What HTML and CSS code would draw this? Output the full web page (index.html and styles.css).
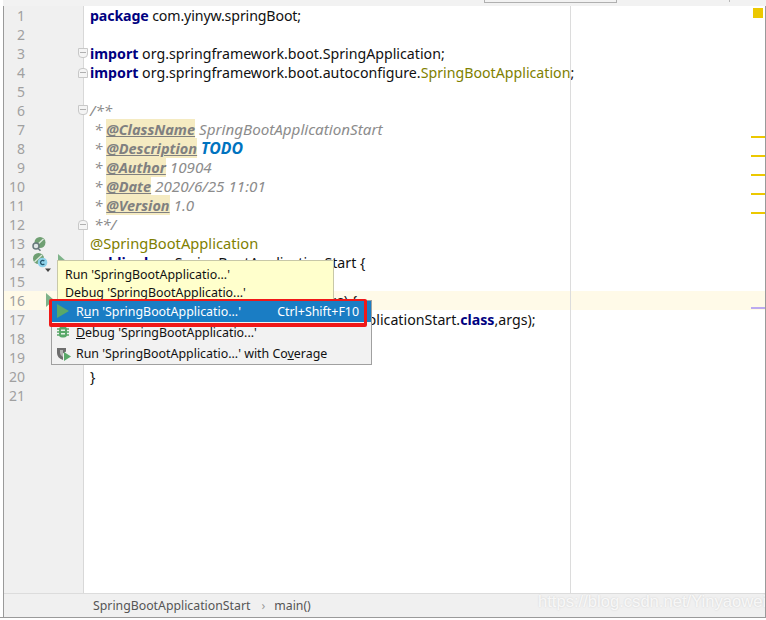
FILE: index.html
```html
<!DOCTYPE html>
<html lang="en">
<head>
    <meta charset="UTF-8">
    <title>SpringBootApplicationStart</title>
    <link rel="stylesheet" href="styles.css">
</head>
<body>
    <div class="ide">
        <div class="topbar"><div class="tab-edge"></div><div class="tick"></div></div>
        <div class="editor">
            <div class="gutter">
                <div class="num">1</div>
                <div class="num">2</div>
                <div class="num">3<span class="fold fold-open"></span></div>
                <div class="num">4<span class="fold fold-end"></span></div>
                <div class="num">5</div>
                <div class="num">6<span class="fold fold-open"></span></div>
                <div class="num">7</div>
                <div class="num">8</div>
                <div class="num">9</div>
                <div class="num">10</div>
                <div class="num">11</div>
                <div class="num">12<span class="fold fold-end"></span></div>
                <div class="num">13
                    <svg class="mark mark-bean" width="16" height="16" viewBox="0 0 16 16">
                        <circle cx="9" cy="6.5" r="5.5" fill="#6f9f72"/>
                        <path d="M5 10 L12.5 3" stroke="#dbe8db" stroke-width="1.4"/>
                        <circle cx="5" cy="10" r="3" fill="#dfe6e6" stroke="#68797c" stroke-width="1.5"/>
                        <path d="M7 12.2 L9.5 14.7" stroke="#68797c" stroke-width="1.6"/>
                    </svg>
                </div>
                <div class="num">14
                    <svg class="mark mark-class" width="22" height="22" viewBox="0 0 22 22">
                        <circle cx="6.5" cy="5.5" r="5.5" fill="#6f9f72"/>
                        <path d="M2.5 9 L10 2" stroke="#dbe8db" stroke-width="1.4"/>
                        <circle cx="10.5" cy="9.5" r="4.8" fill="#8ed2ea"/>
                        <path d="M12.3 8.2 A2.1 2.1 0 1 0 12.3 10.8" fill="none" stroke="#24566e" stroke-width="1.3"/>
                        <path d="M13 15.5 H19 L16 19 Z" fill="#444"/>
                    </svg>
                    <svg class="mark mark-run-a" width="8" height="14" viewBox="0 0 8 14"><path d="M0 0 L8 7 L0 14 Z" fill="#7fb38a"/></svg>
                </div>
                <div class="num">15</div>
                <div class="num num-current">16
                    <svg class="mark mark-run-b" width="8" height="14" viewBox="0 0 8 14"><path d="M0 0 L8 7 L0 14 Z" fill="#7fb38a"/></svg>
                </div>
                <div class="num">17</div>
                <div class="num">18</div>
                <div class="num">19</div>
                <div class="num">20</div>
                <div class="num">21</div>
            </div>
            <div class="code">
                <div class="line line-pkg"><b class="kw">package</b> com.yinyw.springBoot;</div>
                <div class="line"></div>
                <div class="line"><b class="kw">import</b> org.springframework.boot.SpringApplication;</div>
                <div class="line"><b class="kw">import</b> org.springframework.boot.autoconfigure.<span class="anno">SpringBootApplication</span>;</div>
                <div class="line"></div>
                <div class="line doc">/**</div>
                <div class="line doc">&nbsp;* <b class="tag">@ClassName</b> SpringBootApplicationStart</div>
                <div class="line doc">&nbsp;* <b class="tag">@Description</b> <b class="todo">TODO</b></div>
                <div class="line doc">&nbsp;* <b class="tag">@Author</b> 10904</div>
                <div class="line doc">&nbsp;* <b class="tag">@Date</b> 2020/6/25 11:01</div>
                <div class="line doc">&nbsp;* <b class="tag">@Version</b> 1.0</div>
                <div class="line doc">&nbsp;**/</div>
                <div class="line anno anno-line">@SpringBootApplication</div>
                <div class="line"><b class="kw">public class</b> SpringBootApplicationStart {</div>
                <div class="line"></div>
                <div class="line line-current indent-1"><b class="kw">public static void</b> main(String[] args) {</div>
                <div class="line indent-2">SpringApplication.run(SpringBootApplicationStart.<b class="kw">class</b>,args);</div>
                <div class="line indent-1">}</div>
                <div class="line"></div>
                <div class="line">}</div>
                <div class="line"></div>
                <div class="margin-line"></div>
                <div class="stripe stripe-top"></div>
                <div class="stripe stripe-1"></div>
                <div class="stripe stripe-2"></div>
                <div class="stripe stripe-3"></div>
                <div class="stripe stripe-4"></div>
                <div class="stripe stripe-5"></div>
                <div class="stripe stripe-run"></div>
            </div>
        </div>
        <div class="crumbs">
            <span>SpringBootApplicationStart</span>
            <span class="crumb-sep">›</span>
            <span>main()</span>
        </div>

        <div class="tooltip">
            <div>Run 'SpringBootApplicatio...'</div>
            <div>Debug 'SpringBootApplicatio...'</div>
        </div>
        <div class="menu">
            <div class="item item-active">
                <svg class="item-icon" width="14" height="14" viewBox="0 0 14 14"><path d="M1 0 L13 7 L1 14 Z" fill="#59a869"/></svg>
                <span>R<u>u</u>n 'SpringBootApplicatio...'</span>
                <span class="shortcut">Ctrl+Shift+F10</span>
            </div>
            <div class="item">
                <svg class="item-icon" width="14" height="14" viewBox="0 0 14 14">
                    <rect x="3" y="1.5" width="8" height="11" rx="3" fill="#59a869"/>
                    <path d="M1 4 H13 M1 7 H13 M1 10 H13" stroke="#59a869" stroke-width="1.4"/>
                    <path d="M5 5.3 H9 M5 8.7 H9" stroke="#e4f0e6" stroke-width="1.4"/>
                </svg>
                <span><u>D</u>ebug 'SpringBootApplicatio...'</span>
            </div>
            <div class="item">
                <svg class="item-icon" width="16" height="16" viewBox="0 0 16 16">
                    <path d="M1 2 H10 V5.5 L7 7.5 V14 Q1 12 1 7 Z" fill="#6e6e6e"/>
                    <path d="M4 4 H7 V11 Q4 9.5 4 7 Z" fill="#b4b4b4"/>
                    <path d="M8 6 L15 10.5 L8 15 Z" fill="#59a869"/>
                </svg>
                <span>Run 'SpringBootApplicatio...' with Co<u>v</u>erage</span>
            </div>
        </div>
        <div class="callout"></div>
        <div class="watermark">https://blog.csdn.net/Yinyaowei</div>
    </div>
</body>
</html>
```

FILE: styles.css
```css
* {
    box-sizing: border-box;
}
html, body {
    margin: 0;
    padding: 0;
    background: #fff;
}
body {
    width: 766px;
    height: 620px;
    overflow: hidden;
    font-family: "Noto Sans", sans-serif;
}
.ide {
    position: relative;
    width: 766px;
    height: 618px;
    padding-left: 3px;
    display: flex;
    flex-direction: column;
    border-bottom: 1px solid #9a9a9a;
}
.ide::before {
    content: "";
    position: absolute;
    left: 3px;
    top: 0;
    bottom: 0;
    width: 1px;
    background: #9a9a9a;
}
.ide::after {
    content: "";
    position: absolute;
    right: 0;
    top: 6px;
    bottom: 0;
    width: 1px;
    background: #9a9a9a;
}
.topbar {
    position: relative;
    height: 6px;
    background: #f2f2f2;
}
.tab-edge {
    position: absolute;
    left: 481px;
    top: 0;
    width: 133px;
    height: 3px;
    border: 1px solid #b0b0b0;
    border-top: 0;
}
.tick {
    position: absolute;
    left: 726px;
    top: 0;
    width: 1px;
    height: 2px;
    background: #b8b8b8;
}

.editor {
    flex: 1;
    display: flex;
    min-height: 0;
}
.gutter {
    width: 81px;
    padding-left: 1px;
    background: #f0f0f0;
    border-right: 1px solid #d8d8d8;
}
.num {
    position: relative;
    height: 19px;
    line-height: 19px;
    width: 79px;
    font-size: 14px;
    color: #a0a0a0;
    padding-right: 58px;
    text-align: right;
}
.num-current {
    background: #fffae8;
}
.fold {
    position: absolute;
    left: 74px;
    width: 10px;
    height: 10px;
    background: #f4f4f4;
    border: 1px solid #c8c8c8;
}
.fold::after {
    content: "";
    position: absolute;
    left: 1px;
    right: 1px;
    top: 3px;
    height: 1px;
    background: #b0b0b0;
}
.fold-open {
    top: 4px;
    border-radius: 0 0 4px 4px;
}
.fold-end {
    top: 5px;
    border-radius: 4px 4px 0 0;
}
.mark {
    position: absolute;
}
.mark-bean {
    left: 27px;
    top: 2px;
}
.mark-class {
    left: 28px;
    top: 0;
}
.mark-run-a {
    left: 54px;
    top: 1px;
}
.mark-run-b {
    left: 42px;
    top: 2px;
}

.code {
    position: relative;
    flex: 1;
    font-size: 14.2px;
    color: #111;
}
.line {
    height: 19px;
    line-height: 19px;
    padding-left: 6px;
    white-space: nowrap;
}
.line-pkg {
    letter-spacing: -0.13px;
}
.line-current {
    background: #fffae8;
}
.indent-1 {
    padding-left: 16px;
}
.indent-2 {
    padding-left: 41px;
}
.kw {
    color: #000080;
}
.anno {
    color: #808000;
}
.anno-line {
    font-size: 14.7px;
}
.doc {
    color: #8c8c8c;
    font-style: italic;
    font-size: 15.2px;
}
.tag {
    font-size: 14.5px;
    color: #808080;
    background: #f5ebc2;
    text-decoration: underline;
}
.todo {
    font-size: 15.8px;
    color: #0073bf;
}
.margin-line {
    position: absolute;
    left: 486px;
    top: 0;
    bottom: 0;
    width: 1px;
    background: #dcdcdc;
}
.stripe {
    position: absolute;
    right: 1px;
    width: 14px;
    height: 2px;
    background: #ecc800;
}
.stripe-top {
    top: 2px;
    right: 3px;
    width: 10px;
    height: 10px;
}
.stripe-1 { top: 130px; }
.stripe-2 { top: 149px; }
.stripe-3 { top: 168px; }
.stripe-4 { top: 187px; }
.stripe-5 { top: 206px; }
.stripe-run {
    top: 301px;
    background: #bcaaf0;
}

.crumbs {
    height: 24px;
    background: #f0f0f0;
    border-top: 1px solid #dcdcdc;
    padding-left: 90px;
    display: flex;
    align-items: center;
    font-size: 12.3px;
    color: #555;
}
.crumb-sep {
    margin: 0 9px 0 11px;
    color: #999;
}

.tooltip {
    position: absolute;
    left: 57px;
    top: 260px;
    width: 277px;
    height: 50px;
    padding: 5px 0 0 7px;
    background: #ffffcc;
    border: 1px solid #c8c8a8;
    font-size: 12.4px;
    line-height: 18px;
    color: #111;
}
.menu {
    position: absolute;
    left: 51px;
    top: 300px;
    width: 321px;
    height: 65px;
    background: #f2f2f2;
    border: 1px solid #a0a0a0;
    font-size: 12.4px;
    color: #111;
}
.item {
    height: 21px;
    display: flex;
    align-items: center;
    padding-left: 24px;
    position: relative;
    white-space: nowrap;
}
.item-active {
    background: #1a7dc4;
    color: #fff;
}
.item-icon {
    position: absolute;
    left: 4px;
    top: 3px;
}
.shortcut {
    margin-left: auto;
    padding-right: 12px;
}
.callout {
    position: absolute;
    left: 49px;
    top: 299px;
    width: 318px;
    height: 28px;
    border: 3px solid #f01818;
    border-top-width: 2px;
    border-bottom-width: 4px;
    border-radius: 2px;
}
.watermark {
    position: absolute;
    left: 538px;
    top: 590px;
    font-family: "Liberation Sans", sans-serif;
    font-size: 16.6px;
    line-height: 24px;
    color: rgba(255, 255, 255, 0.8);
    text-shadow: 0 0 2px rgba(0, 0, 0, 0.14);
    white-space: nowrap;
}
```
